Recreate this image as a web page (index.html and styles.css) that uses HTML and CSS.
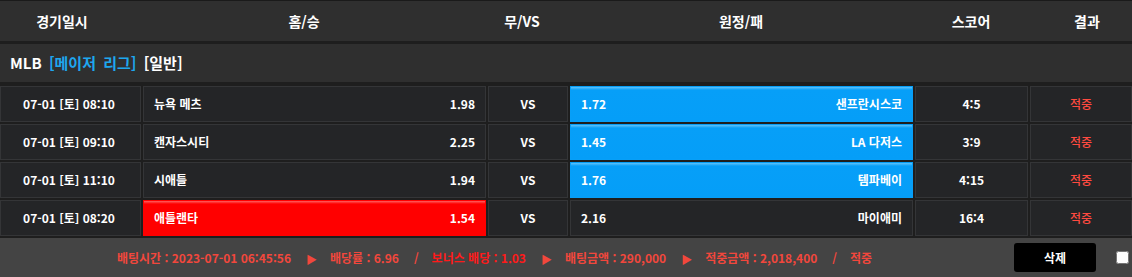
FILE: index.html
```html
<!DOCTYPE html>
<html lang="ko">
<head>
<meta charset="utf-8">
<link rel="stylesheet" href="styles.css">
</head>
<body>
<div class="board">
  <div class="head">
    <div class="h h-date">경기일시</div>
    <div class="h h-home">홈/승</div>
    <div class="h h-vs">무/VS</div>
    <div class="h h-away">원정/패</div>
    <div class="h h-score">스코어</div>
    <div class="h h-result">결과</div>
  </div>
  <div class="league"><span>MLB <span class="blue">[메이저 리그]</span> [일반]</span></div>
  <div class="rows">
    <div class="row">
      <div class="cell date">07-01 [토] 08:10</div>
      <div class="cell team"><span>뉴욕 메츠</span><span>1.98</span></div>
      <div class="cell vs">VS</div>
      <div class="cell team sel-blue"><span>1.72</span><span>샌프란시스코</span></div>
      <div class="cell score">4:5</div>
      <div class="cell result">적중</div>
    </div>
    <div class="row">
      <div class="cell date">07-01 [토] 09:10</div>
      <div class="cell team"><span>캔자스시티</span><span>2.25</span></div>
      <div class="cell vs">VS</div>
      <div class="cell team sel-blue"><span>1.45</span><span>LA 다저스</span></div>
      <div class="cell score">3:9</div>
      <div class="cell result">적중</div>
    </div>
    <div class="row">
      <div class="cell date">07-01 [토] 11:10</div>
      <div class="cell team"><span>시애틀</span><span>1.94</span></div>
      <div class="cell vs">VS</div>
      <div class="cell team sel-blue"><span>1.76</span><span>템파베이</span></div>
      <div class="cell score">4:15</div>
      <div class="cell result">적중</div>
    </div>
    <div class="row">
      <div class="cell date">07-01 [토] 08:20</div>
      <div class="cell team sel-red"><span>애틀랜타</span><span>1.54</span></div>
      <div class="cell vs">VS</div>
      <div class="cell team"><span>2.16</span><span>마이애미</span></div>
      <div class="cell score">16:4</div>
      <div class="cell result">적중</div>
    </div>
  </div>
  <div class="foot">
    <div class="info">
      <span>배팅시간 : 2023-07-01 06:45:56</span>
      <span class="arrow">▶</span>
      <span>배당률 : 6.96</span>
      <span class="slash">/</span>
      <span class="bonus">보너스 배당 : 1.03</span>
      <span class="arrow">▶</span>
      <span>배팅금액 : 290,000</span>
      <span class="arrow">▶</span>
      <span>적중금액 : 2,018,400</span>
      <span class="slash">/</span>
      <span>적중</span>
    </div>
    <button class="del">삭제</button>
    <input class="chk" type="checkbox">
  </div>
</div>
</body>
</html>
```

FILE: styles.css
```css
* { box-sizing: border-box; }
html, body {
  margin: 0;
  padding: 0;
  background: #1e1e1e;
}
body {
  font-family: "Noto Sans CJK KR", "Noto Sans", sans-serif;
  font-weight: 700;
  color: #ffffff;
  width: 1132px;
}
.board {
  display: flex;
  flex-direction: column;
}
.head {
  display: grid;
  grid-template-columns: 124px 360px 76px 362px 98px 112px;
  height: 41px;
  border-top: 1px solid #1a1a1a;
  background: #2f2f2f;
  align-items: center;
  font-size: 14px;
  line-height: 16px;
  margin-bottom: 3px;
}
.h { text-align: center; }
.h-result { padding-left: 22px; }
.league {
  height: 38px;
  background: #2f2f2f;
  display: flex;
  align-items: center;
  padding-left: 10px;
  font-size: 15px;
  line-height: 18px;
  margin-bottom: 4px;
  white-space: pre;
  word-spacing: 3px;
}
.league .blue { color: #1ea7ef; }
.rows {
  display: flex;
  flex-direction: column;
  gap: 2px;
  margin-bottom: 2px;
}
.row {
  display: grid;
  grid-template-columns: 141px 343px 80px 343px 113px 102px;
  column-gap: 2px;
  height: 36px;
}
.cell {
  background: #242527;
  border: 1px solid #343537;
  display: flex;
  align-items: center;
  font-size: 12px;
  line-height: 14px;
}
.date, .vs, .score, .result { justify-content: center; }
.date { padding-right: 3px; }
.team {
  justify-content: space-between;
  padding: 0 10px 0 10px;
}
.sel-blue {
  background: linear-gradient(#5ec2fb 0, #079ff8 3px, #059ef8 100%);
  border-color: #079ff8;
}
.sel-red {
  background: linear-gradient(#ff6060 0, #ff0000 3px, #ff0000 100%);
  border-color: #ff0000;
}
.result { color: #ff4a40; font-weight: 500; }
.foot {
  height: 39px;
  background: #444444;
  display: flex;
  align-items: center;
  padding-left: 117px;
  font-size: 12px;
  line-height: 14px;
  color: #f2473c;
}
.info {
  display: flex;
  align-items: center;
  flex: 1;
  white-space: pre;
}
.arrow {
  font-size: 11px;
  margin: 2px 13px 0 15px;
}
.slash { margin: 0 13px 0 15px; }
.bonus { color: #ff1a1a; }
.del {
  width: 82px;
  height: 29px;
  background: #000000;
  color: #ffffff;
  border: none;
  border-radius: 3px;
  font-family: "Noto Sans CJK KR", sans-serif;
  font-weight: 700;
  font-size: 12px;
  margin-left: 0;
  margin-right: 20px;
  padding: 0;
}
.chk {
  width: 13px;
  height: 13px;
  margin: 0 3px 0 0;
}
```
